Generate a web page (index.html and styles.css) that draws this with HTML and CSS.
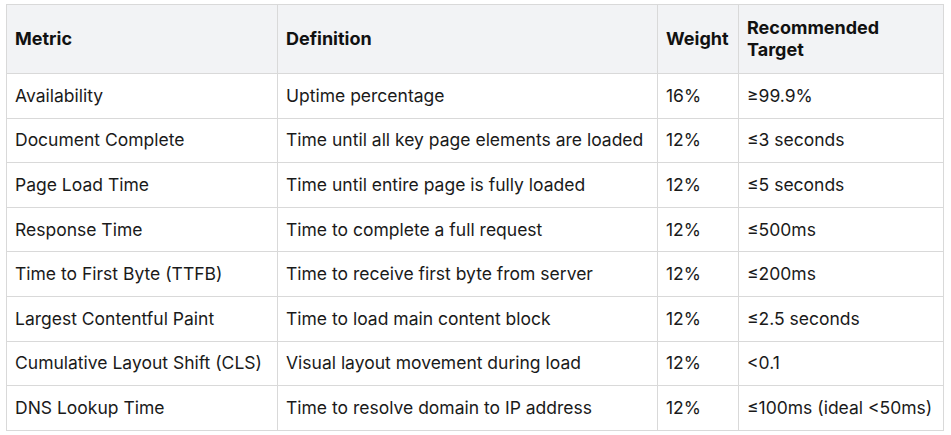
FILE: index.html
```html
<!DOCTYPE html>
<html>
<head>
<meta charset="utf-8">
<link rel="stylesheet" href="styles.css">
</head>
<body>
<table class="metrics">
  <colgroup>
    <col class="c1"><col class="c2"><col class="c3"><col class="c4">
  </colgroup>
  <thead>
    <tr><th>Metric</th><th>Definition</th><th>Weight</th><th>Recommended<br>Target</th></tr>
  </thead>
  <tbody>
    <tr><td>Availability</td><td>Uptime percentage</td><td>16%</td><td>≥99.9%</td></tr>
    <tr><td>Document Complete</td><td>Time until all key page elements are loaded</td><td>12%</td><td>≤3 seconds</td></tr>
    <tr><td>Page Load Time</td><td>Time until entire page is fully loaded</td><td>12%</td><td>≤5 seconds</td></tr>
    <tr><td>Response Time</td><td>Time to complete a full request</td><td>12%</td><td>≤500ms</td></tr>
    <tr><td>Time to First Byte (TTFB)</td><td>Time to receive first byte from server</td><td>12%</td><td>≤200ms</td></tr>
    <tr><td>Largest Contentful Paint</td><td>Time to load main content block</td><td>12%</td><td>≤2.5 seconds</td></tr>
    <tr><td>Cumulative Layout Shift (CLS)</td><td>Visual layout movement during load</td><td>12%</td><td>&lt;0.1</td></tr>
    <tr><td>DNS Lookup Time</td><td>Time to resolve domain to IP address</td><td>12%</td><td>≤100ms (ideal &lt;50ms)</td></tr>
  </tbody>
</table>
</body>
</html>
```
FILE: styles.css
```css
html, body {
  margin: 0;
  background: #ffffff;
}
body {
  padding: 4px 0 0 6px;
  font-family: Inter, "Liberation Sans", sans-serif;
  color: #1a1a1a;
}
.metrics {
  border-collapse: collapse;
  table-layout: fixed;
  width: 937px;
  font-size: 17.5px;
  line-height: 22px;
}
.c1 { width: 271px; }
.c2 { width: 380px; }
.c3 { width: 81px; }
.c4 { width: 205px; }
.metrics th, .metrics td {
  border: 1px solid #d9d9d9;
  padding: 10.8px 8px;
  text-align: left;
  vertical-align: middle;
}
.metrics th {
  background: #f2f3f5;
  font-weight: 700;
  font-size: 18px;
  color: #111111;
  padding-top: 12px;
  padding-bottom: 12px;
}
```
